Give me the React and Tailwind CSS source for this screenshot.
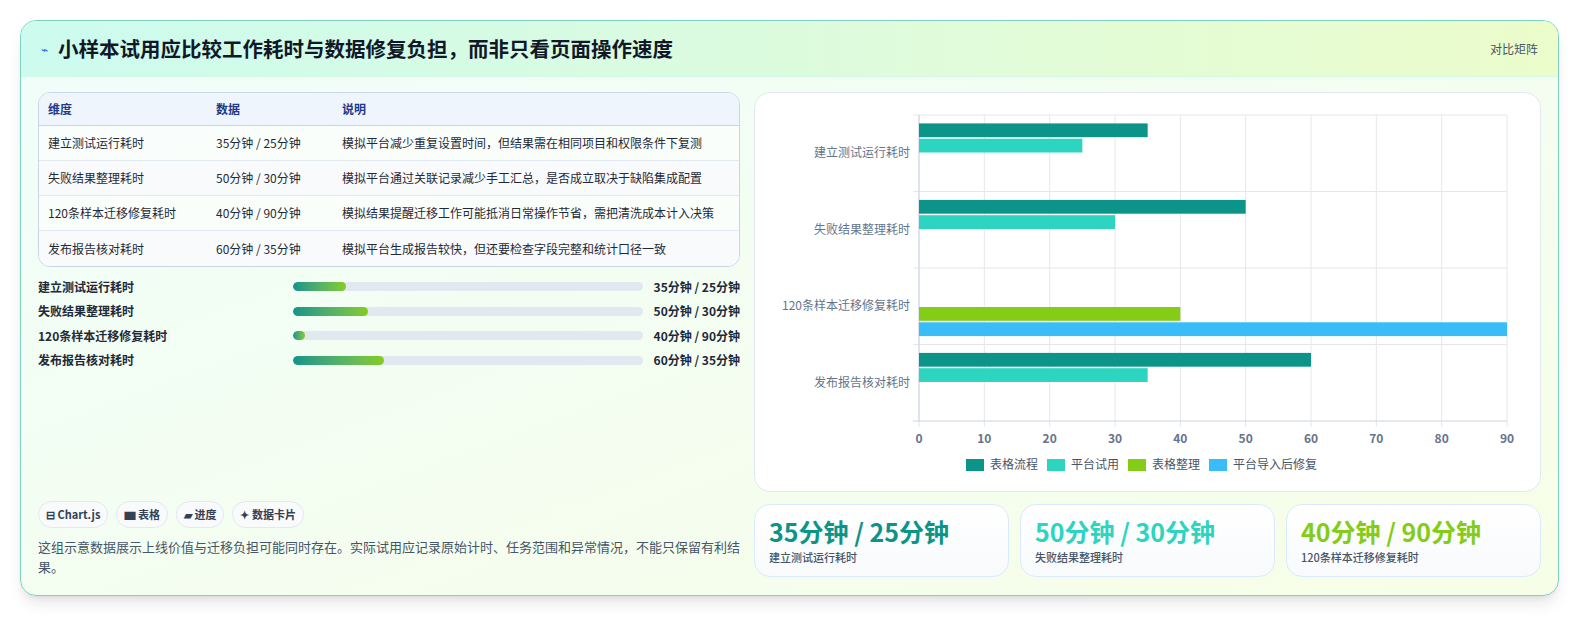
const F = { fontFamily: '"Noto Sans CJK SC", "Noto Sans", sans-serif' };
const rows = [
  ["建立测试运行耗时", "35分钟 / 25分钟", "模拟平台减少重复设置时间，但结果需在相同项目和权限条件下复测", 15],
  ["失败结果整理耗时", "50分钟 / 30分钟", "模拟平台通过关联记录减少手工汇总，是否成立取决于缺陷集成配置", 21.5],
  ["120条样本迁移修复耗时", "40分钟 / 90分钟", "模拟结果提醒迁移工作可能抵消日常操作节省，需把清洗成本计入决策", 3.5],
  ["发布报告核对耗时", "60分钟 / 35分钟", "模拟平台生成报告较快，但还要检查字段完整和统计口径一致", 26],
];
const data = [[35, 25, null, null], [50, 30, null, null], [null, null, 40, 90], [60, 35, null, null]];
const cols = ["#0d9488", "#2dd4bf", "#84cc16", "#38bdf8"];
const legend = ["表格流程", "平台试用", "表格整理", "平台导入后修复"];

function Chart() {
  const x0 = 164, x1 = 752, y0 = 22, y1 = 328, sc = (x1 - x0) / 90, band = (y1 - y0) / 4;
  return (
    <svg width="775" height="400" className="block" style={F}>
      {[0,1,2,3,4,5,6,7,8,9].map(i => <line key={i} x1={x0 + i*10*sc} x2={x0 + i*10*sc} y1={y0} y2={y1 + 6} stroke="#e5e7eb" />)}
      {[0,1,2,3,4].map(i => <line key={i} x1={x0 - 6} x2={x1} y1={y0 + i*band} y2={y0 + i*band} stroke={i===4 ? "#cbd5e1" : "#e5e7eb"} />)}
      <line x1={x0} x2={x0} y1={y0} y2={y1} stroke="#cbd5e1" />
      {data.map((r, c) => r.map((v, s) => v == null ? null :
        <rect key={c+"-"+s} x={x0} y={y0 + c*band + 8.4 + s*15.3} width={v*sc} height={13.8} fill={cols[s]} />))}
      {rows.map((r, c) => <text key={c} x={155} y={y0 + c*band + band/2 + 4} textAnchor="end" fontSize="12" fill="#64748b">{r[0]}</text>)}
      {[0,1,2,3,4,5,6,7,8,9].map(i => <text key={i} x={x0 + i*10*sc} y={350} textAnchor="middle" fontSize="12" fontWeight="600" fill="#64748b">{i*10}</text>)}
      {(() => { let x = 211; return legend.map((l, i) => { const el = (
        <g key={i}><rect x={x} y={366} width={18} height={12} fill={cols[i]} /><text x={x + 24} y={376} fontSize="12" fill="#475569">{l}</text></g>);
        x += 24 + l.length * 12 + 9; return el; }); })()}
    </svg>
  );
}

export default function App() {
  return (
    <div className="w-[1579px] h-[621px] bg-white p-5 pt-5" style={F}>
      <div className="h-[576px] rounded-2xl border border-[#7dd3c0] bg-gradient-to-br from-[#f0fdfa] to-[#f7fee7] overflow-hidden shadow-lg flex flex-col">
        <div className="h-[56px] shrink-0 flex items-center justify-between px-[20px] bg-gradient-to-r from-[#ccfbef] to-[#ecfccb] border-b border-[#d1fae5]">
          <div className="flex items-center gap-[10px]"><span className="text-[#2563eb] text-xs">⌁</span><span className="text-[20.5px] font-bold text-[#111827]">小样本试用应比较工作耗时与数据修复负担，而非只看页面操作速度</span></div>
          <span className="text-xs text-[#475569]">对比矩阵</span>
        </div>
        <div className="flex gap-[14px] pl-[17px] pr-[17px] pt-[15px] flex-1">
          <div className="w-[702px] shrink-0 flex flex-col">
            <div className="rounded-xl border border-[#cbd5e1] overflow-hidden bg-white/60">
              <div className="grid grid-cols-[168px_126px_1fr] h-[33px] items-center px-[9px] bg-[#eef5fd] border-b border-[#cbd5e1] text-xs font-semibold text-[#1e3a8a]"><span>维度</span><span>数据</span><span>说明</span></div>
              {rows.map((r, i) => (
                <div key={i} className={"grid grid-cols-[168px_126px_1fr] h-[35px] items-center px-[9px] text-xs text-[#1f2937] " + (i < 3 ? "border-b border-[#e2e8f0] " : "") + (i % 2 ? "bg-[#f8fafc]" : "")}>
                  <span>{r[0]}</span><span>{r[1]}</span><span>{r[2]}</span>
                </div>))}
            </div>
            <div className="flex flex-col gap-[9px] mt-[12px]">
              {rows.map((r, i) => (
                <div key={i} className="flex items-center h-[15.5px] text-xs font-bold text-[#1f2937]">
                  <span className="w-[255px]">{r[0]}</span>
                  <div className="flex-1 h-[9px] rounded-full bg-[#e2e8f0] overflow-hidden"><div className="h-full rounded-full bg-gradient-to-r from-[#0d9488] to-[#84cc16]" style={{ width: r[3] + "%" }} /></div>
                  <span className="w-[97px] text-right">{r[1]}</span>
                </div>))}
            </div>
            <div className="flex gap-2 mt-auto">
              {["⊟ Chart.js", "▆ 表格", "▰ 进度", "✦ 数据卡片"].map(t => <span key={t} className="h-[27px] px-[7px] flex items-center rounded-full border border-[#e2e8f0] bg-[#f8fafc] text-[11px] font-semibold text-[#334155]">{t}</span>)}
            </div>
            <p className="text-[13px] leading-[20px] text-[#475569] mt-[9px] mb-[18px]">这组示意数据展示上线价值与迁移负担可能同时存在。实际试用应记录原始计时、任务范围和异常情况，不能只保留有利结果。</p>
          </div>
          <div className="flex-1 flex flex-col gap-[12px]">
            <div className="h-[400px] rounded-2xl border border-[#e2e8f0] bg-white"><Chart /></div>
            <div className="grid grid-cols-3 gap-[11px]">
              {[[rows[0], "#0d9488"], [rows[1], "#2dd4bf"], [rows[2], "#84cc16"]].map(([r, c], i) => (
                <div key={i} className="h-[73px] rounded-2xl border border-[#dbeafe] bg-gradient-to-b from-white to-[#f8fafc] px-[14px] pt-[10px]">
                  <div className="text-[25px] font-bold leading-[32px]" style={{ color: c }}>{r[1]}</div>
                  <div className="text-[11px] text-[#475569] font-medium mt-[2px]">{r[0]}</div>
                </div>))}
            </div>
          </div>
        </div>
      </div>
    </div>
  );
}
